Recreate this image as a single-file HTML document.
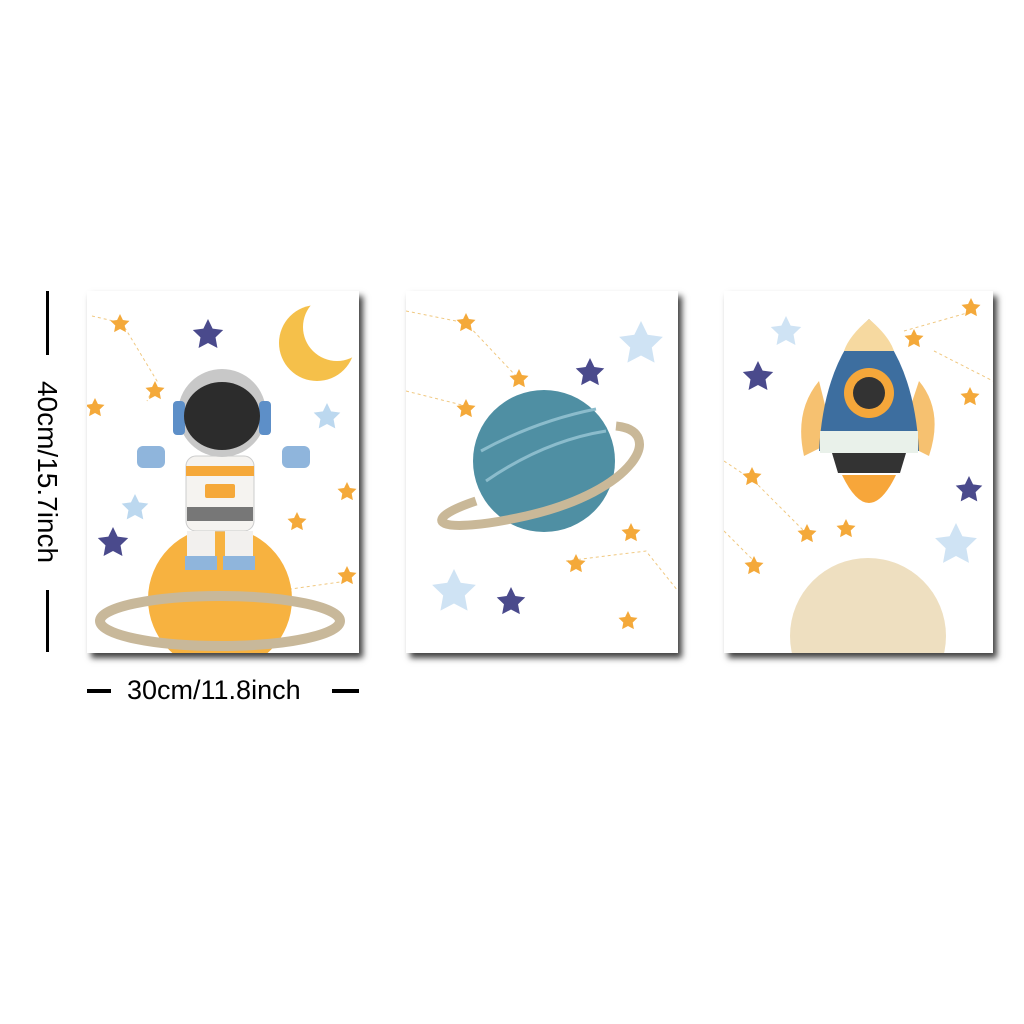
<!DOCTYPE html>
<html><head><style>
body{margin:0;width:1024px;height:1024px;background:#fff;position:relative;overflow:hidden;font-family:"Liberation Sans",sans-serif}
.p{position:absolute;background:#fff;box-shadow:4px 5px 6px rgba(0,0,0,.75);overflow:hidden}
.l{position:absolute;background:#000}
</style></head><body>
<svg width="0" height="0" style="position:absolute"><defs><path id="s" d="M0,-10 L2.9,-4 L9.5,-3.1 L4.7,1.5 L5.9,8.1 L0,5 L-5.9,8.1 L-4.7,1.5 L-9.5,-3.1 L-2.9,-4Z"/></defs></svg>
<div class="l" style="left:46px;top:291px;width:3px;height:64px"></div>
<div class="l" style="left:46px;top:590px;width:3px;height:62px"></div>
<div style="position:absolute;left:47px;top:472px;transform:translate(-50%,-50%) rotate(90deg);font-size:28px;white-space:nowrap">40cm/15.7inch</div>
<div class="l" style="left:87px;top:689px;width:24px;height:4px"></div>
<div class="l" style="left:332px;top:689px;width:27px;height:4px"></div>
<div style="position:absolute;left:127px;top:675px;font-size:27px">30cm/11.8inch</div>

<div class="p" style="left:87px;top:291px;width:272px;height:362px">
<svg width="272" height="362">
<path d="M5 25 L35 32 L70 90 L60 110 M190 300 L260 290" stroke="#f0c880" stroke-dasharray="3 3" fill="none"/>
<g fill="#f4a93a"><use href="#s" x="33" y="33"/><use href="#s" x="8" y="117"/><use href="#s" x="68" y="100"/><use href="#s" x="260" y="201"/><use href="#s" x="260" y="285"/><use href="#s" x="210" y="231"/></g>
<g fill="#4a4a8c"><path transform="translate(121 44) scale(1.6)" d="M0,-10 L2.9,-4 L9.5,-3.1 L4.7,1.5 L5.9,8.1 L0,5 L-5.9,8.1 L-4.7,1.5 L-9.5,-3.1 L-2.9,-4Z"/><path transform="translate(26 252) scale(1.6)" d="M0,-10 L2.9,-4 L9.5,-3.1 L4.7,1.5 L5.9,8.1 L0,5 L-5.9,8.1 L-4.7,1.5 L-9.5,-3.1 L-2.9,-4Z"/></g>
<g fill="#bcd8ef"><path transform="translate(240 126) scale(1.4)" d="M0,-10 L2.9,-4 L9.5,-3.1 L4.7,1.5 L5.9,8.1 L0,5 L-5.9,8.1 L-4.7,1.5 L-9.5,-3.1 L-2.9,-4Z"/><path transform="translate(48 217) scale(1.4)" d="M0,-10 L2.9,-4 L9.5,-3.1 L4.7,1.5 L5.9,8.1 L0,5 L-5.9,8.1 L-4.7,1.5 L-9.5,-3.1 L-2.9,-4Z"/></g>
<circle cx="230" cy="52" r="38" fill="#f5c04a"/>
<circle cx="250" cy="36" r="34" fill="#fff"/>
<circle cx="133" cy="308" r="72" fill="#f7b240"/>
<ellipse cx="133" cy="330" rx="120" ry="25" fill="none" stroke="#c8b89a" stroke-width="10"/>
<rect x="99" y="165" width="68" height="75" rx="10" fill="#f5f3f0" stroke="#ccc"/>
<rect x="99" y="175" width="68" height="10" fill="#f5a83a"/>
<rect x="118" y="193" width="30" height="14" rx="2" fill="#f5a83a"/>
<rect x="100" y="216" width="66" height="14" fill="#777"/>
<rect x="100" y="240" width="28" height="35" fill="#f2f0ee"/><rect x="138" y="240" width="28" height="35" fill="#f2f0ee"/>
<rect x="98" y="265" width="32" height="14" fill="#8fb5dc"/><rect x="136" y="265" width="32" height="14" fill="#8fb5dc"/>
<rect x="50" y="155" width="28" height="22" rx="6" fill="#8fb5dc"/><rect x="195" y="155" width="28" height="22" rx="6" fill="#8fb5dc"/>
<circle cx="135" cy="122" r="44" fill="#c8c8c8"/>
<rect x="86" y="110" width="12" height="34" rx="4" fill="#5d8fc8"/><rect x="172" y="110" width="12" height="34" rx="4" fill="#5d8fc8"/>
<ellipse cx="135" cy="125" rx="38" ry="34" fill="#2c2c2c"/>
</svg></div>

<div class="p" style="left:406px;top:291px;width:272px;height:362px">
<svg width="272" height="362">
<path d="M0 20 L60 32 L110 85 M0 100 L60 115 M160 270 L240 260 L272 300" stroke="#f0c880" stroke-dasharray="3 3" fill="none"/>
<g fill="#f4a93a"><use href="#s" x="60" y="32"/><use href="#s" x="113" y="88"/><use href="#s" x="60" y="118"/><use href="#s" x="225" y="242"/><use href="#s" x="170" y="273"/><use href="#s" x="222" y="330"/></g>
<g fill="#4a4a8c"><path transform="translate(184 82) scale(1.5)" d="M0,-10 L2.9,-4 L9.5,-3.1 L4.7,1.5 L5.9,8.1 L0,5 L-5.9,8.1 L-4.7,1.5 L-9.5,-3.1 L-2.9,-4Z"/><path transform="translate(105 311) scale(1.5)" d="M0,-10 L2.9,-4 L9.5,-3.1 L4.7,1.5 L5.9,8.1 L0,5 L-5.9,8.1 L-4.7,1.5 L-9.5,-3.1 L-2.9,-4Z"/></g>
<g fill="#cfe3f4"><path transform="translate(235 53) scale(2.3)" d="M0,-10 L2.9,-4 L9.5,-3.1 L4.7,1.5 L5.9,8.1 L0,5 L-5.9,8.1 L-4.7,1.5 L-9.5,-3.1 L-2.9,-4Z"/><path transform="translate(48 301) scale(2.3)" d="M0,-10 L2.9,-4 L9.5,-3.1 L4.7,1.5 L5.9,8.1 L0,5 L-5.9,8.1 L-4.7,1.5 L-9.5,-3.1 L-2.9,-4Z"/></g>
<circle cx="138" cy="170" r="71" fill="#4f8fa3"/>
<path d="M80 190 Q138 150 200 140 M75 160 Q130 130 190 118" stroke="#8bbccc" stroke-width="3" fill="none"/>
<path d="M70 210 C10 230 30 245 120 225 C230 200 260 140 210 135" stroke="#c9b898" stroke-width="9" fill="none"/>
</svg></div>

<div class="p" style="left:724px;top:291px;width:269px;height:362px">
<svg width="269" height="362">
<path d="M0 170 L30 190 L80 240 M0 240 L30 270 M180 40 L250 20 M210 60 L269 90" stroke="#f0c880" stroke-dasharray="3 3" fill="none"/>
<g fill="#f4a93a"><use href="#s" x="247" y="17"/><use href="#s" x="190" y="48"/><use href="#s" x="246" y="106"/><use href="#s" x="28" y="186"/><use href="#s" x="83" y="243"/><use href="#s" x="30" y="275"/><use href="#s" x="122" y="238"/></g>
<g fill="#4a4a8c"><path transform="translate(34 86) scale(1.6)" d="M0,-10 L2.9,-4 L9.5,-3.1 L4.7,1.5 L5.9,8.1 L0,5 L-5.9,8.1 L-4.7,1.5 L-9.5,-3.1 L-2.9,-4Z"/><path transform="translate(245 199) scale(1.4)" d="M0,-10 L2.9,-4 L9.5,-3.1 L4.7,1.5 L5.9,8.1 L0,5 L-5.9,8.1 L-4.7,1.5 L-9.5,-3.1 L-2.9,-4Z"/></g>
<g fill="#cfe3f4"><path transform="translate(62 41) scale(1.6)" d="M0,-10 L2.9,-4 L9.5,-3.1 L4.7,1.5 L5.9,8.1 L0,5 L-5.9,8.1 L-4.7,1.5 L-9.5,-3.1 L-2.9,-4Z"/><path transform="translate(232 254) scale(2.2)" d="M0,-10 L2.9,-4 L9.5,-3.1 L4.7,1.5 L5.9,8.1 L0,5 L-5.9,8.1 L-4.7,1.5 L-9.5,-3.1 L-2.9,-4Z"/></g>
<circle cx="144" cy="345" r="78" fill="#eedfc0"/>
<path d="M95 90 Q70 120 80 165 L110 150Z M195 90 Q220 120 205 165 L175 150Z" fill="#f6c170"/>
<path d="M145 28 Q100 70 95 160 L195 160 Q190 70 145 28Z" fill="#3d6e9f"/>
<path d="M145 28 Q125 45 120 60 L170 60 Q165 45 145 28Z" fill="#f6d9a0"/>
<rect x="96" y="140" width="98" height="22" fill="#e9f1ea"/>
<path d="M108 162 L182 162 L176 182 L114 182Z" fill="#333"/>
<path d="M118 184 Q145 240 172 184Z" fill="#f7a63a"/>
<circle cx="145" cy="102" r="25" fill="#f5a73a"/>
<circle cx="145" cy="102" r="16" fill="#333"/>
</svg></div>
</body></html>
